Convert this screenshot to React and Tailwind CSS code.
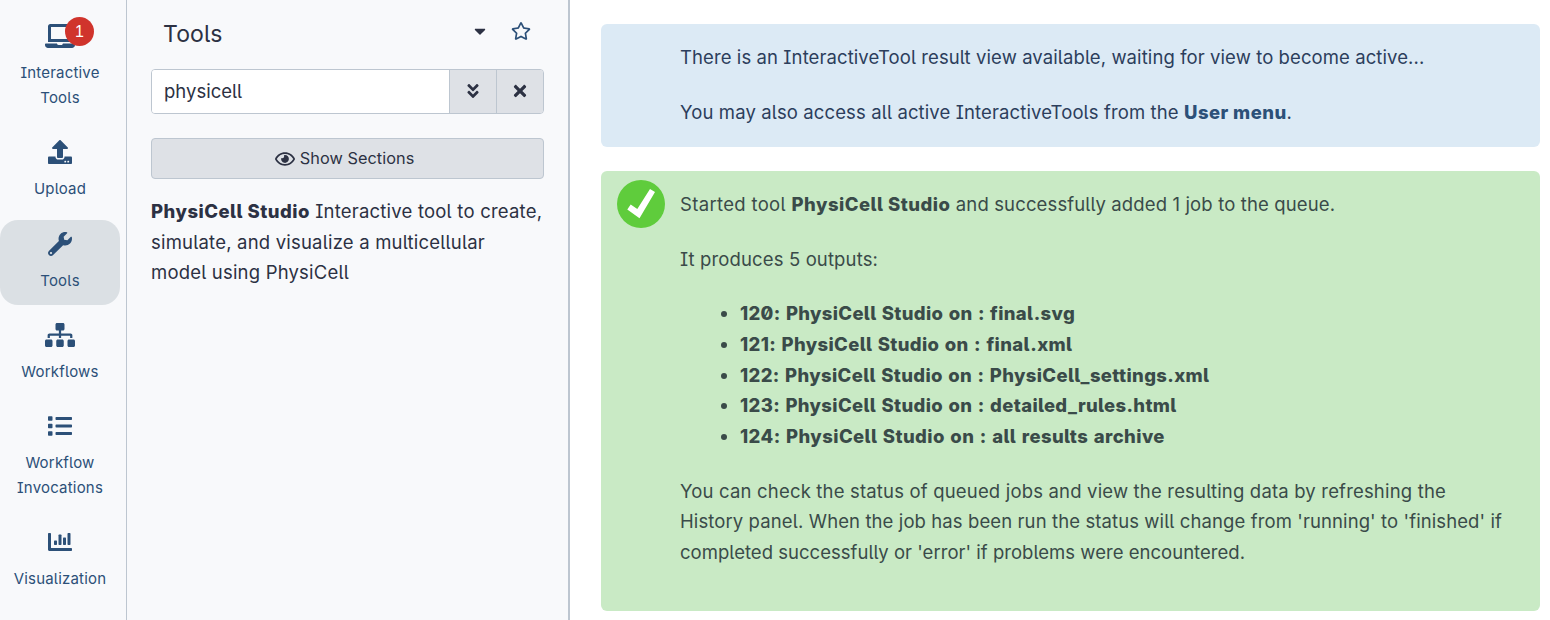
import {
  FaLaptop, FaUpload, FaWrench, FaSitemap, FaList, FaCaretDown,
  FaRegStar, FaAngleDoubleDown, FaTimes, FaRegEye,
} from "react-icons/fa";

function BarsIcon({ className }) {
  return (
    <svg viewBox="0 0 512 512" fill="currentColor" className={className}>
      <path d="M496 384H64V80c0-8.840-7.160-16-16-16H16C7.160 64 0 71.160 0 80v336c0 17.670 14.330 32 32 32h464c8.840 0 16-7.160 16-16v-32c0-8.840-7.160-16-16-16z" />
      <rect x="128" y="224" width="64" height="96" rx="14" />
      <rect x="224" y="96" width="64" height="224" rx="14" />
      <rect x="320" y="160" width="64" height="160" rx="14" />
      <rect x="416" y="64" width="64" height="256" rx="14" />
    </svg>
  );
}

const items = [
  { icon: FaLaptop, lines: ["Interactive", "Tools"], badge: "1", wide: true },
  { icon: FaUpload, lines: ["Upload"] },
  { icon: FaWrench, lines: ["Tools"], active: true },
  { icon: FaSitemap, lines: ["Workflows"], wide: true },
  { icon: FaList, lines: ["Workflow", "Invocations"] },
  { icon: BarsIcon, lines: ["Visualization"] },
];

function ActivityBar() {
  return (
    <nav className="flex h-full w-[127px] shrink-0 flex-col gap-[6.3px] border-r border-[#bdc6d0] bg-[#f8f9fb] pt-3 text-[#2c5078]">
      {items.map(({ icon: Icon, lines, badge, active, wide }) => (
        <button
          key={lines.join(" ")}
          className={`flex w-[120px] flex-col items-center gap-3 rounded-[18px] py-3 ${active ? "bg-[#dbe0e4]" : ""}`}
        >
          <span className="relative flex h-6 items-center">
            <Icon className={wide ? "h-6 w-[30px]" : "h-6 w-6"} />
            {badge && (
              <span className="absolute -top-[7px] left-5 flex size-[29px] items-center justify-center rounded-full bg-[#d0342c] font-['Liberation_Sans',sans-serif] text-[16px] text-white">
                {badge}
              </span>
            )}
          </span>
          <span className="flex flex-col items-center text-[15px] leading-[25px] tracking-[0.2px]">
            {lines.map((l) => <span key={l}>{l}</span>)}
          </span>
        </button>
      ))}
    </nav>
  );
}

function ToolPanel() {
  return (
    <section className="flex h-full w-[443px] shrink-0 flex-col border-r-2 border-[#bdc6d0] bg-[#f8f9fb] px-6 text-[#2c3143]">
      <header className="flex h-[69px] items-center pl-3 pr-[13px]">
        <h2 className="mb-[2px] flex-1 text-[23px] leading-[30px] tracking-[0.1px]">Tools</h2>
        <FaCaretDown className="mr-[22px] mb-[7px] h-[18px] w-[18px]" />
        <FaRegStar className="mb-[7px] h-[18px] w-5 text-[#2c5078]" />
      </header>
      <div className="flex h-[45px] w-[393px] overflow-hidden rounded-[4px] border border-[#bdc6d0]">
        <div className="flex flex-1 items-center bg-white pl-3">physicell</div>
        <button className="flex w-[47px] items-center justify-center border-l border-[#bdc6d0] bg-[#dee1e6] pb-[2px]">
          <FaAngleDoubleDown className="size-[18px]" />
        </button>
        <button className="flex w-[47px] items-center justify-center border-l border-[#bdc6d0] bg-[#dee1e6] pb-[2px]">
          <FaTimes className="size-[18px]" />
        </button>
      </div>
      <button className="mt-6 flex h-[41px] w-[393px] items-center justify-center gap-[5px] rounded-[4px] border border-[#bdc6d0] bg-[#dee1e6] pr-[6px] text-[16.3px] tracking-[0.05px]">
        <FaRegEye className="h-[18px] w-5" />
        Show Sections
      </button>
      <p className="mt-[17px] whitespace-nowrap leading-[30.6px]">
        <b className="font-extrabold tracking-[0.491px]">PhysiCell Studio</b>{" "}
        <span className="tracking-[0.21px]">Interactive tool to create,</span><br />
        <span className="tracking-[0.2px]">simulate, and visualize a multicellular</span><br />
        <span className="tracking-[0.19px]">model using PhysiCell</span>
      </p>
    </section>
  );
}

function CheckBadge() {
  return (
    <svg viewBox="0 0 48 48" className="mt-[9px] size-12 shrink-0">
      <circle cx="24" cy="24" r="24" fill="#5fcc3c" />
      <path d="M10.300 29.500 L13.700 24.500 L20.300 29 L33 9 L38 12 L22.500 38.200 Z" fill="#fff" />
    </svg>
  );
}

function Results() {
  return (
    <main className="flex h-full flex-1 flex-col gap-6 bg-white pt-6 pl-[31px] pr-[10px] leading-[30.7px] whitespace-nowrap">
      <div className="flex h-[123px] shrink-0 flex-col gap-6 rounded-[6px] bg-[#dceaf5] pt-[18px] pl-[79px] text-[#2c3e5c]">
        <p className="tracking-[0.09px]">There is an InteractiveTool result view available, waiting for view to become active...</p>
        <p className="tracking-[0.115px]">
          You may also access all active InteractiveTools from the{" "}
          <a className="font-extrabold tracking-[0.415px] text-[#2c5078]">User menu</a>.
        </p>
      </div>
      <div className="flex h-[440px] shrink-0 gap-[15px] rounded-[6px] bg-[#c9eac5] pl-4 text-[#3a4b49]">
        <CheckBadge />
        <div className="flex flex-col gap-[23.9px] pt-[18px]">
          <p>
            <span className="tracking-[0.33px]">Started tool </span>
            <b className="font-extrabold tracking-[0.491px]">PhysiCell Studio</b>
            <span className="tracking-[0.135px]"> and successfully added 1 job to the queue.</span>
          </p>
          <p className="tracking-[0.131px]">It produces 5 outputs:</p>
          <ul className="list-disc pl-[60px] font-extrabold [word-spacing:1px]">
            <li className="tracking-[0.325px]">120: PhysiCell Studio on : final.svg</li>
            <li className="tracking-[0.36px]">121: PhysiCell Studio on : final.xml</li>
            <li className="tracking-[0.353px]">122: PhysiCell Studio on : PhysiCell_settings.xml</li>
            <li className="tracking-[0.347px]">123: PhysiCell Studio on : detailed_rules.html</li>
            <li className="tracking-[0.415px]">124: PhysiCell Studio on : all results archive</li>
          </ul>
          <p>
            <span className="tracking-[0.177px]">You can check the status of queued jobs and view the resulting data by refreshing the</span><br />
            <span className="tracking-[0.101px]">History panel. When the job has been run the status will change from 'running' to 'finished' if</span><br />
            <span className="tracking-[0.026px]">completed successfully or 'error' if problems were encountered.</span>
          </p>
        </div>
      </div>
    </main>
  );
}

export default function App() {
  return (
    <div className="flex h-[620px] w-[1550px] overflow-hidden bg-white font-['Inter',sans-serif] text-[18.5px] [font-feature-settings:'cv08','cv05','zero']">
      <ActivityBar />
      <ToolPanel />
      <Results />
    </div>
  );
}
